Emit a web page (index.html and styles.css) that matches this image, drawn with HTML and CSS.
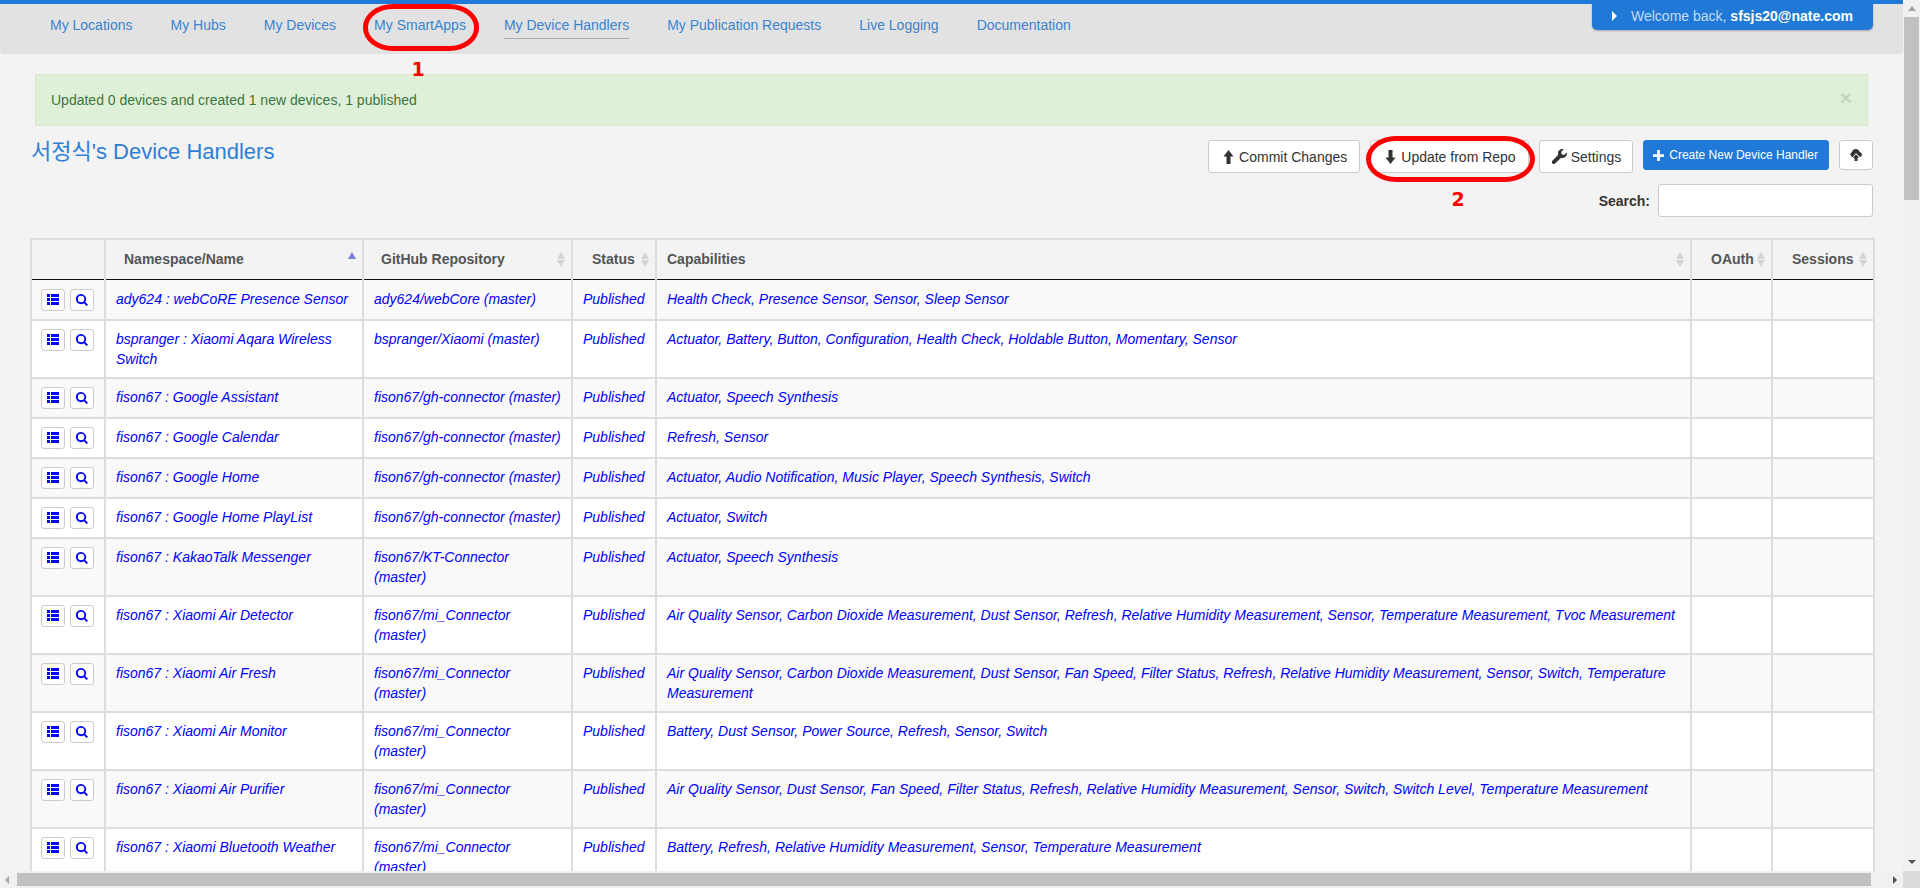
FILE: index.html
```html
<!DOCTYPE html>
<html lang="en">
<head>
<meta charset="utf-8">
<title>Device Handlers</title>
<link rel="stylesheet" href="styles.css">
</head>
<body>
<svg class="defs" width="0" height="0" aria-hidden="true">
  <symbol id="i-list" viewBox="0 0 12 11"><path d="M0 0h3v3H0zM4 0h8v3H4zM0 4h3v3H0zM4 4h8v3H4zM0 8h3v3H0zM4 8h8v3H4z"/></symbol>
  <symbol id="i-search" viewBox="0 0 13 13"><path d="M5.500 0a5.500 5.500 0 0 1 4.500 8.600l3 3-1.500 1.400-3-3A5.500 5.500 0 1 1 5.500 0zm0 2a3.500 3.500 0 1 0 0 7 3.500 3.500 0 0 0 0-7z"/></symbol>
  <symbol id="i-up" viewBox="0 0 11 14"><path d="M5.500 0l5 6.500H7.500V14h-4V6.500H.5z"/></symbol>
  <symbol id="i-down" viewBox="0 0 11 14"><path d="M3.500 0h4v7.500h3L5.500 14l-5-6.500h3z"/></symbol>
  <symbol id="i-wrench" viewBox="0 0 14 14"><path d="M13.800 3.200l-2.500 2.400-2.200-.6-.6-2.200L11 .2C9.500-.3 7.800 0 6.700 1.200 5.600 2.300 5.300 3.900 5.800 5.300L.4 11a1.700 1.700 0 0 0 2.500 2.500l5.600-5.400c1.400.5 3 .2 4.100-.9 1.200-1.100 1.600-2.700 1.200-4z"/></symbol>
  <symbol id="i-plus" viewBox="0 0 12 12"><path d="M4.500 0h3v4.500H12v3H7.500V12h-3V7.500H0v-3h4.500z"/></symbol>
  <symbol id="i-cloud" viewBox="0 0 12 12"><path d="M2.700 8A2.600 2.600 0 0 1 2 3 3.900 3.900 0 0 1 9.500 2.900 2.600 2.600 0 0 1 10 8L6 4z"/><path d="M6 5.300L9.200 8.700H7.500V12h-3V8.700H2.800z"/></symbol>
</svg>

<div class="app">
  <main class="viewport">
    <div class="page">
      <nav class="topnav">
        <ul class="navlist">
          <li><a href="#">My Locations</a></li>
          <li><a href="#">My Hubs</a></li>
          <li><a href="#">My Devices</a></li>
          <li><a href="#">My SmartApps</a></li>
          <li><a href="#" class="current">My Device Handlers</a></li>
          <li><a href="#">My Publication Requests</a></li>
          <li><a href="#">Live Logging</a></li>
          <li><a href="#">Documentation</a></li>
        </ul>
        <div class="welcome"><span class="caret"></span><span class="welcome-text">Welcome back, <b>sfsjs20@nate.com</b></span></div>
      </nav>

      <div class="alert">
        <span>Updated 0 devices and created 1 new devices, 1 published</span>
        <span class="close">×</span>
      </div>

      <div class="titlebar">
        <h1 class="title">서정식's Device Handlers</h1>
        <div class="toolbar">
          <a class="btn" href="#"><svg class="ico ico-arrow"><use href="#i-up"/></svg>Commit Changes</a>
          <a class="btn" href="#"><svg class="ico ico-arrow"><use href="#i-down"/></svg>Update from Repo</a>
          <a class="btn btn-settings" href="#"><svg class="ico ico-wrench"><use href="#i-wrench"/></svg>Settings</a>
          <a class="btn btn-primary" href="#"><svg class="ico ico-plus"><use href="#i-plus"/></svg>Create New Device Handler</a>
          <a class="btn btn-icon" href="#" aria-label="Upload"><svg class="ico ico-cloud"><use href="#i-cloud"/></svg></a>
        </div>
      </div>

      <div class="searchbar">
        <label class="search-label" for="search">Search:</label>
        <input class="search-input" id="search" type="text">
      </div>

      <table class="grid">
        <colgroup>
          <col class="c-act"><col class="c-name"><col class="c-repo"><col class="c-status"><col class="c-caps"><col class="c-oauth"><col class="c-sess">
        </colgroup>
        <thead>
          <tr>
            <th></th>
            <th class="sort asc">Namespace/Name</th>
            <th class="sort th-repo">GitHub Repository</th>
            <th class="sort th-tight">Status</th>
            <th class="sort th-caps">Capabilities</th>
            <th class="sort th-tight">OAuth</th>
            <th class="sort th-tight">Sessions</th>
          </tr>
        </thead>
        <tbody>
          <tr>
            <td class="acts"><div class="acts-in"><a class="mini" href="#"><svg><use href="#i-list"/></svg></a><a class="mini" href="#"><svg class="s"><use href="#i-search"/></svg></a></div></td>
            <td><a href="#">ady624 : webCoRE Presence Sensor</a></td>
            <td><a href="#">ady624/webCore (master)</a></td>
            <td><a href="#">Published</a></td>
            <td><a href="#">Health Check, Presence Sensor, Sensor, Sleep Sensor</a></td>
            <td></td><td></td>
          </tr>
          <tr>
            <td class="acts"><div class="acts-in"><a class="mini" href="#"><svg><use href="#i-list"/></svg></a><a class="mini" href="#"><svg class="s"><use href="#i-search"/></svg></a></div></td>
            <td><a href="#">bspranger : Xiaomi Aqara Wireless Switch</a></td>
            <td><a href="#">bspranger/Xiaomi (master)</a></td>
            <td><a href="#">Published</a></td>
            <td><a href="#">Actuator, Battery, Button, Configuration, Health Check, Holdable Button, Momentary, Sensor</a></td>
            <td></td><td></td>
          </tr>
          <tr>
            <td class="acts"><div class="acts-in"><a class="mini" href="#"><svg><use href="#i-list"/></svg></a><a class="mini" href="#"><svg class="s"><use href="#i-search"/></svg></a></div></td>
            <td><a href="#">fison67 : Google Assistant</a></td>
            <td><a href="#">fison67/gh-connector (master)</a></td>
            <td><a href="#">Published</a></td>
            <td><a href="#">Actuator, Speech Synthesis</a></td>
            <td></td><td></td>
          </tr>
          <tr>
            <td class="acts"><div class="acts-in"><a class="mini" href="#"><svg><use href="#i-list"/></svg></a><a class="mini" href="#"><svg class="s"><use href="#i-search"/></svg></a></div></td>
            <td><a href="#">fison67 : Google Calendar</a></td>
            <td><a href="#">fison67/gh-connector (master)</a></td>
            <td><a href="#">Published</a></td>
            <td><a href="#">Refresh, Sensor</a></td>
            <td></td><td></td>
          </tr>
          <tr>
            <td class="acts"><div class="acts-in"><a class="mini" href="#"><svg><use href="#i-list"/></svg></a><a class="mini" href="#"><svg class="s"><use href="#i-search"/></svg></a></div></td>
            <td><a href="#">fison67 : Google Home</a></td>
            <td><a href="#">fison67/gh-connector (master)</a></td>
            <td><a href="#">Published</a></td>
            <td><a href="#">Actuator, Audio Notification, Music Player, Speech Synthesis, Switch</a></td>
            <td></td><td></td>
          </tr>
          <tr>
            <td class="acts"><div class="acts-in"><a class="mini" href="#"><svg><use href="#i-list"/></svg></a><a class="mini" href="#"><svg class="s"><use href="#i-search"/></svg></a></div></td>
            <td><a href="#">fison67 : Google Home PlayList</a></td>
            <td><a href="#">fison67/gh-connector (master)</a></td>
            <td><a href="#">Published</a></td>
            <td><a href="#">Actuator, Switch</a></td>
            <td></td><td></td>
          </tr>
          <tr>
            <td class="acts"><div class="acts-in"><a class="mini" href="#"><svg><use href="#i-list"/></svg></a><a class="mini" href="#"><svg class="s"><use href="#i-search"/></svg></a></div></td>
            <td><a href="#">fison67 : KakaoTalk Messenger</a></td>
            <td><a href="#">fison67/KT-Connector (master)</a></td>
            <td><a href="#">Published</a></td>
            <td><a href="#">Actuator, Speech Synthesis</a></td>
            <td></td><td></td>
          </tr>
          <tr>
            <td class="acts"><div class="acts-in"><a class="mini" href="#"><svg><use href="#i-list"/></svg></a><a class="mini" href="#"><svg class="s"><use href="#i-search"/></svg></a></div></td>
            <td><a href="#">fison67 : Xiaomi Air Detector</a></td>
            <td><a href="#">fison67/mi_Connector (master)</a></td>
            <td><a href="#">Published</a></td>
            <td><a href="#">Air Quality Sensor, Carbon Dioxide Measurement, Dust Sensor, Refresh, Relative Humidity Measurement, Sensor, Temperature Measurement, Tvoc Measurement</a></td>
            <td></td><td></td>
          </tr>
          <tr>
            <td class="acts"><div class="acts-in"><a class="mini" href="#"><svg><use href="#i-list"/></svg></a><a class="mini" href="#"><svg class="s"><use href="#i-search"/></svg></a></div></td>
            <td><a href="#">fison67 : Xiaomi Air Fresh</a></td>
            <td><a href="#">fison67/mi_Connector (master)</a></td>
            <td><a href="#">Published</a></td>
            <td><a href="#">Air Quality Sensor, Carbon Dioxide Measurement, Dust Sensor, Fan Speed, Filter Status, Refresh, Relative Humidity Measurement, Sensor, Switch, Temperature Measurement</a></td>
            <td></td><td></td>
          </tr>
          <tr>
            <td class="acts"><div class="acts-in"><a class="mini" href="#"><svg><use href="#i-list"/></svg></a><a class="mini" href="#"><svg class="s"><use href="#i-search"/></svg></a></div></td>
            <td><a href="#">fison67 : Xiaomi Air Monitor</a></td>
            <td><a href="#">fison67/mi_Connector (master)</a></td>
            <td><a href="#">Published</a></td>
            <td><a href="#">Battery, Dust Sensor, Power Source, Refresh, Sensor, Switch</a></td>
            <td></td><td></td>
          </tr>
          <tr>
            <td class="acts"><div class="acts-in"><a class="mini" href="#"><svg><use href="#i-list"/></svg></a><a class="mini" href="#"><svg class="s"><use href="#i-search"/></svg></a></div></td>
            <td><a href="#">fison67 : Xiaomi Air Purifier</a></td>
            <td><a href="#">fison67/mi_Connector (master)</a></td>
            <td><a href="#">Published</a></td>
            <td><a href="#">Air Quality Sensor, Dust Sensor, Fan Speed, Filter Status, Refresh, Relative Humidity Measurement, Sensor, Switch, Switch Level, Temperature Measurement</a></td>
            <td></td><td></td>
          </tr>
          <tr>
            <td class="acts"><div class="acts-in"><a class="mini" href="#"><svg><use href="#i-list"/></svg></a><a class="mini" href="#"><svg class="s"><use href="#i-search"/></svg></a></div></td>
            <td><a href="#">fison67 : Xiaomi Bluetooth Weather</a></td>
            <td><a href="#">fison67/mi_Connector (master)</a></td>
            <td><a href="#">Published</a></td>
            <td><a href="#">Battery, Refresh, Relative Humidity Measurement, Sensor, Temperature Measurement</a></td>
            <td></td><td></td>
          </tr>
        </tbody>
      </table>

      <div class="mark mark-1"></div>
      <div class="mark-num num-1">1</div>
      <div class="mark mark-2"></div>
      <div class="mark-num num-2">2</div>
    </div>
  </main>

  <div class="vbar">
    <span class="arr arr-up"></span>
    <span class="vthumb"></span>
    <span class="arr arr-down"></span>
  </div>
  <div class="hbar">
    <span class="arr arr-left"></span>
    <span class="hthumb"></span>
    <span class="arr arr-right"></span>
  </div>
  <div class="corner"></div>
</div>
</body>
</html>
```

FILE: styles.css
```css
* { box-sizing: border-box; }
html, body { margin: 0; height: 100%; overflow: hidden; }
body {
  font-family: "Liberation Sans", "Noto Sans CJK KR", Arial, sans-serif;
  font-size: 14px;
  line-height: 20px;
  color: #333;
  background: #f3f3f3;
}
.defs { position: absolute; }
a { text-decoration: none; }

.app {
  display: grid;
  grid-template-columns: 1fr 17px;
  grid-template-rows: 1fr 17px;
  width: 1920px;
  height: 888px;
}
.viewport { overflow: hidden; min-width: 0; min-height: 0; }
.page {
  position: relative;
  border-top: 4px solid #2079d6;
  height: 1200px;
}

/* nav */
.topnav {
  position: relative;
  height: 50px;
  background: #e2e2e2;
  border-radius: 0 0 4px 4px;
}
.navlist {
  display: flex;
  gap: 38px;
  margin: 0;
  padding: 11px 0 0 50px;
  list-style: none;
  font-size: 14px;
}
.navlist a { display: block; color: #3b84cf; padding-bottom: 3px; border-bottom: 1px solid transparent; }
.navlist a.current { border-bottom-color: #b0b0b0; }
.welcome {
  position: absolute;
  top: -1px;
  right: 30px;
  display: flex;
  align-items: center;
  width: 281px;
  height: 27px;
  padding: 0 0 2px 20px;
  background: #2079d6;
  border-radius: 0 0 5px 5px;
  box-shadow: 0 1px 2px rgba(0,0,0,.25);
  color: #c4dcf5;
  font-size: 14px;
}
.welcome b { color: #fff; }
.caret {
  width: 0; height: 0;
  margin-right: 14px;
  border-left: 5px solid #fff;
  border-top: 5px solid transparent;
  border-bottom: 5px solid transparent;
}

/* alert */
.alert {
  display: flex;
  justify-content: space-between;
  align-items: center;
  width: 1833px;
  height: 52px;
  margin: 20px 0 0 35px;
  padding: 0 15px;
  background: #dff0d8;
  border: 1px solid #d6e9c6;
  color: #3c763d;
  font-size: 14px;
}
.close { font-size: 21px; font-weight: 700; color: #c2d6bc; margin-top: -5px; }

/* title + toolbar */
.titlebar {
  display: flex;
  justify-content: space-between;
  align-items: flex-start;
  margin: 14px 30px 0 31px;
}
.title { margin: 0; font-size: 22px; line-height: 24px; font-weight: 400; color: #2f7fd6; }
.toolbar { display: flex; gap: 10px; align-items: flex-start; }
.btn {
  display: flex;
  align-items: center;
  height: 33px;
  padding: 0 12px 0 14px;
  background: #fff;
  border: 1px solid #ccc;
  border-radius: 3px;
  color: #333;
  font-size: 14px;
  white-space: nowrap;
}
.btn-settings { padding: 0 11px 0 12px; }
.btn-primary {
  height: 30px;
  padding: 0 10px 0 9px;
  background: #2079d6;
  border-color: #2079d6;
  color: #fff;
  font-size: 12px;
}
.btn-icon { width: 34px; height: 30px; padding: 0; justify-content: center; }
.ico { display: block; fill: currentColor; flex: none; }
.ico-arrow { width: 11px; height: 14px; margin-right: 5px; }
.ico-wrench { width: 15px; height: 15px; margin-right: 4px; }
.ico-plus { width: 11px; height: 11px; margin-right: 5px; }
.ico-cloud { width: 12px; height: 12px; }

/* search */
.searchbar {
  display: flex;
  justify-content: flex-end;
  align-items: center;
  gap: 8px;
  margin: 11px 30px 0 0;
}
.search-label { font-weight: 700; font-size: 14px; }
.search-input {
  width: 215px;
  height: 33px;
  background: #fff;
  border: 1px solid #ccc;
  border-radius: 3px;
}

/* table */
.grid {
  table-layout: fixed;
  border-collapse: collapse;
  width: 1843px;
  margin: 21px 0 0 30px;
}
.c-act { width: 74px; }
.c-name { width: 258px; }
.c-repo { width: 209px; }
.c-status { width: 84px; }
.c-caps { width: 1035px; }
.c-oauth { width: 81px; }
.c-sess { width: 102px; }
.grid th, .grid td { border: 2px solid #ddd; vertical-align: top; }
.grid th {
  position: relative;
  height: 40px;
  padding: 0 18px;
  border-bottom: 1px solid #111;
  text-align: left;
  vertical-align: middle;
  color: #555;
  font-size: 14px;
  white-space: nowrap;
}
.grid th.th-repo { padding-left: 17px; }
.grid th.th-tight { padding: 0 0 0 19px; }
.grid th.th-caps { padding: 0 0 0 10px; }
.grid td { padding: 8px 10px; font-size: 14px; }
.grid tbody tr:first-child td { border-top: 1px solid #111; padding-top: 9px; }
.grid td a { color: #00f; font-style: italic; }
.grid tbody tr:nth-child(odd) td { background: #f9f9f9; }
.grid tbody tr:nth-child(even) td { background: #fff; }
.grid td.acts { padding-left: 9px; padding-right: 0; }
.acts-in { display: flex; gap: 5px; }
.mini {
  display: flex;
  align-items: center;
  justify-content: center;
  width: 24px;
  height: 22px;
  background: #fff;
  border: 1px solid #ccc;
  border-radius: 3px;
  fill: #00f;
}
.mini svg { width: 12px; height: 11px; }
.mini svg.s { width: 12px; height: 12px; }

/* sort arrows */
.sort::before, .sort::after {
  content: "";
  position: absolute;
  right: 6px;
  width: 0; height: 0;
  border-left: 4px solid transparent;
  border-right: 4px solid transparent;
}
.sort::before { top: 12px; border-bottom: 7px solid #d4d4d4; }
.sort::after { top: 20px; border-top: 7px solid #d4d4d4; }
.sort.asc::before { border-bottom-color: #7c7cdc; }
.sort.asc::after { display: none; }

/* annotations */
.mark {
  position: absolute;
  border: 5px solid #f00;
  border-radius: 30px / 23px;
}
.mark-1 { left: 363px; top: 0; width: 116px; height: 47px; }
.mark-2 { left: 1366px; top: 132px; width: 169px; height: 46px; }
.mark-num {
  position: absolute;
  width: 20px;
  text-align: center;
  color: #f00;
  font: 700 19px/20px "DejaVu Sans", sans-serif;
}
.num-1 { left: 408px; top: 55px; }
.num-2 { left: 1448px; top: 185px; }

/* fake scrollbars */
.vbar, .hbar { display: flex; background: #f1f1f1; position: relative; }
.vbar { flex-direction: column; align-items: center; grid-row: 1; grid-column: 2; }
.hbar { align-items: center; grid-row: 2; grid-column: 1; }
.vthumb { width: 15px; height: 183px; background: #c1c1c1; margin-top: 0; }
.hthumb { width: 1854px; height: 13px; background: #c1c1c1; }
.corner { background: #dcdcdc; grid-row: 2; grid-column: 2; }
.arr { display: block; width: 0; height: 0; flex: none; }
.arr-up { margin: 6px 0 6px; border-left: 4px solid transparent; border-right: 4px solid transparent; border-bottom: 5px solid #a3a3a3; }
.arr-down { margin: auto 0 7px; border-left: 4px solid transparent; border-right: 4px solid transparent; border-top: 4px solid #505050; }
.arr-left { margin: 0 8px 0 5px; border-top: 4px solid transparent; border-bottom: 4px solid transparent; border-right: 4px solid #a3a3a3; }
.arr-right { margin: 0 0 0 22px; border-top: 4px solid transparent; border-bottom: 4px solid transparent; border-left: 4px solid #505050; }
```
